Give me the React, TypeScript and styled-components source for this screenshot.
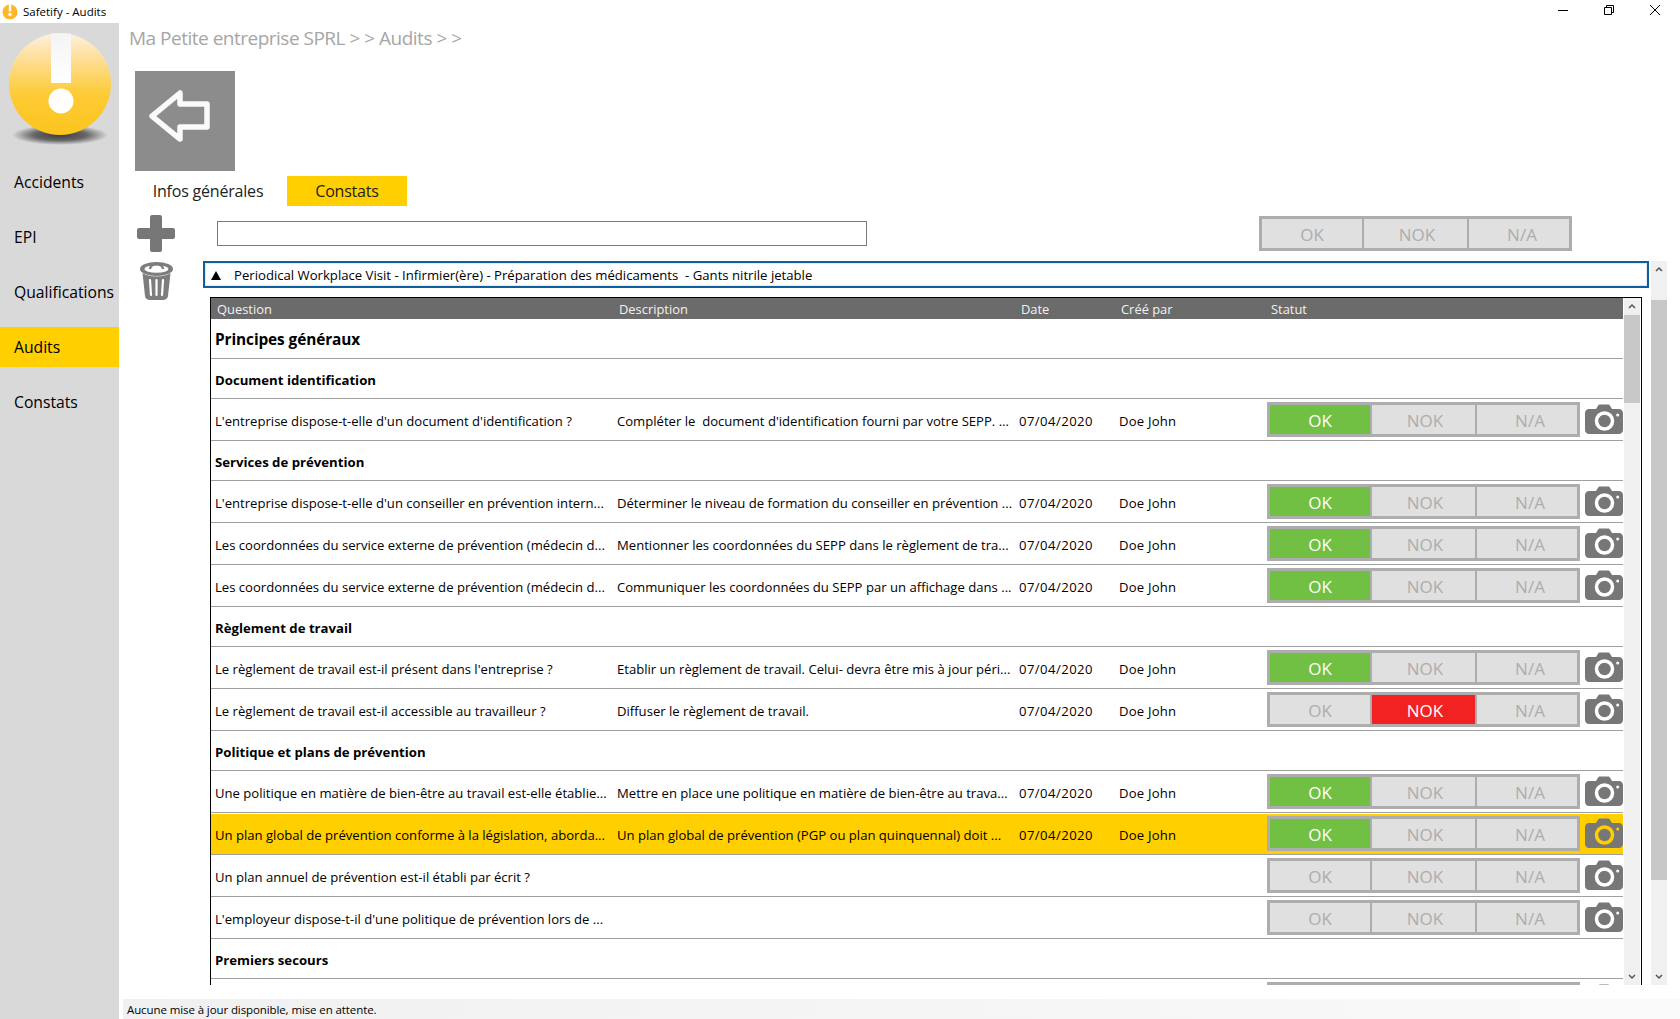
import styled, { createGlobalStyle } from 'styled-components';

type Status = 'ok' | 'nok' | 'none';
type Line =
  | { kind: 'section'; label: string }
  | { kind: 'row'; question: string; description?: string; filled?: boolean; status: Status; selected?: boolean; clipped?: boolean };

const FONT = `'Open Sans', 'Noto Sans', 'Liberation Sans', sans-serif`;

const Global = createGlobalStyle`
  html, body {
    margin: 0;
    padding: 0;
    height: 100%;
    overflow: hidden;
    background: #fff;
  }
  #root { height: 100%; }
  * { box-sizing: border-box; }
`;

const Window = styled.div`
  display: flex;
  flex-direction: column;
  width: 1680px;
  height: 1019px;
  font-family: ${FONT};
  color: #000;
`;

const TitleBar = styled.div`
  display: flex;
  align-items: center;
  height: 23px;
  flex: none;
  padding-left: 2px;
`;

const TitleText = styled.span`
  margin: 0 0 1px 5px;
  font-size: 11.5px;
`;

const WindowButtons = styled.div`
  display: flex;
  margin-left: auto;
  margin-right: 2px;
  height: 23px;
`;

const WindowButton = styled.div`
  display: flex;
  justify-content: center;
  width: 46px;
  padding-top: 4px;
`;

const Body = styled.div`
  display: flex;
  flex: 1;
  min-height: 0;
`;

const Sidebar = styled.nav`
  display: flex;
  flex-direction: column;
  width: 119px;
  flex: none;
  background: #d9d9d9;
`;

const LogoBox = styled.div`
  height: 139px;
  flex: none;
`;

const NavList = styled.div`
  display: flex;
  flex-direction: column;
  gap: 15px;
`;

const NavItem = styled.div<{ $active?: boolean }>`
  display: flex;
  align-items: center;
  height: 40px;
  padding-left: 14px;
  font-size: 15.7px;
  white-space: nowrap;
  background: ${props => (props.$active ? '#ffcf00' : 'transparent')};
`;

const Main = styled.main`
  display: flex;
  flex-direction: column;
  flex: 1;
  min-width: 0;
`;

const Breadcrumb = styled.div`
  height: 48px;
  flex: none;
  padding-left: 10px;
  font-size: 19px;
  line-height: 31px;
  letter-spacing: -0.5px;
  white-space: pre;
  color: #a6a6a6;
`;

const BackButton = styled.div`
  width: 100px;
  height: 100px;
  flex: none;
  margin-left: 16px;
  background: #8c8c8c;
`;

const Tabs = styled.div`
  display: flex;
  gap: 6px;
  margin: 5px 0 0 16px;
  flex: none;
`;

const Tab = styled.div<{ $active?: boolean }>`
  display: flex;
  align-items: center;
  justify-content: center;
  width: ${props => (props.$active ? '120px' : '146px')};
  height: 30px;
  font-size: 16px;
  letter-spacing: -0.2px;
  color: #222;
  background: ${props => (props.$active ? '#ffcf00' : 'transparent')};
`;

const Toolbar = styled.div`
  display: flex;
  align-items: center;
  height: 37px;
  flex: none;
  margin-top: 9px;
  padding-left: 18px;
`;

const SearchInput = styled.div`
  width: 650px;
  height: 25px;
  margin-left: 42px;
  border: 1px solid #7a7a7a;
  background: #fff;
`;

const FilterSlot = styled.div`
  margin-left: 392px;
`;

const Content = styled.div`
  display: flex;
  flex: 1;
  min-height: 0;
  padding: 9px 13px 0 21px;
`;

const ActionColumn = styled.div`
  width: 63px;
  flex: none;
`;

const GroupColumn = styled.div`
  display: flex;
  flex-direction: column;
  width: 1446px;
  flex: none;
  margin-bottom: 14px;
`;

const GroupHeader = styled.div`
  display: flex;
  align-items: center;
  height: 27px;
  flex: none;
  padding: 1px 0 0 6px;
  border: 2px solid #0f5f9f;
  box-shadow: inset 0 0 0 1px #dcebf7;
  font-size: 13.15px;
  white-space: pre;
`;

const Triangle = styled.span`
  width: 0;
  height: 0;
  margin-right: 13px;
  border-left: 5.5px solid transparent;
  border-right: 5.5px solid transparent;
  border-bottom: 9px solid #000;
`;

const TableFrame = styled.div`
  display: flex;
  flex: 1;
  min-height: 0;
  margin: 9px 7px 0 7px;
  border-top: 1px solid #000;
  border-left: 1px solid #000;
  border-right: 1px solid #000;
  overflow: hidden;
`;

const TableScroll = styled.div`
  flex: 1;
  min-width: 0;
  overflow: hidden;
`;

const HeaderRow = styled.div`
  display: grid;
  grid-template-columns: 402px 402px 100px 148px 1fr;
  align-items: center;
  height: 21px;
  padding: 1px 0 0 4px;
  background: #6b6b6b;
  color: #f2f2f2;
  font-size: 12.9px;
`;

const HeaderCell = styled.span<{ $indent?: number }>`
  padding-left: ${props => props.$indent ?? 2}px;
`;

const TitleRow = styled.div`
  display: flex;
  align-items: center;
  height: 40px;
  padding: 2px 0 0 4px;
  border-bottom: 1px solid #a0a0a0;
  font-size: 15.4px;
  font-weight: 700;
  letter-spacing: -0.1px;
`;

const SectionRow = styled.div`
  display: flex;
  align-items: center;
  height: 40px;
  padding: 2px 0 0 4px;
  border-bottom: 1px solid #a0a0a0;
  font-size: 13.2px;
  font-weight: 700;
`;

const DataRow = styled.div<{ $selected?: boolean }>`
  display: grid;
  grid-template-columns: 402px 402px 100px 148px 313px 1fr;
  align-items: center;
  height: 42px;
  padding-left: 4px;
  border-bottom: 1px solid #a0a0a0;
  font-size: 13.1px;
  white-space: nowrap;
  background: ${props => (props.$selected ? '#ffcf00' : 'transparent')};
  box-shadow: ${props => (props.$selected ? 'inset 0 1px 0 #fff' : 'none')};
`;

const Cell = styled.span`
  overflow: hidden;
  padding-top: 2px;
  white-space: pre;
`;

const DateCell = styled(Cell)`
  letter-spacing: 0.45px;
`;

const AuthorCell = styled(Cell)`
  letter-spacing: 0.2px;
`;

const CameraSlot = styled.div`
  display: flex;
  padding: 0 0 1px 5px;
`;

const Toggle = styled.div`
  display: grid;
  grid-template-columns: 100px 103px 100px;
  gap: 2px;
  width: 313px;
  height: 35px;
  padding: 3px;
  background: #adadad;
`;

const ToggleCell = styled.div<{ $tone?: 'ok' | 'nok' }>`
  display: flex;
  align-items: center;
  justify-content: center;
  padding-top: 1px;
  font-size: 17px;
  color: ${props => (props.$tone ? '#fff' : '#adadad')};
  background: ${props =>
    props.$tone === 'ok' ? '#72c043' : props.$tone === 'nok' ? '#f22222' : '#e0e0e0'};

  &:nth-child(2) {
    padding-left: 3px;
  }

  &:nth-child(3) {
    padding-left: 6px;
  }
`;

const Scrollbar = styled.div<{ $top: number; $thumb: number }>`
  position: relative;
  flex: none;
  width: 16px;
  background: #f0f0f0;

  &::before {
    content: '';
    position: absolute;
    left: 0;
    right: 0;
    top: ${props => props.$top}px;
    height: ${props => props.$thumb}px;
    background: #c8c8c8;
  }
`;

const InnerBar = styled(Scrollbar)`
  margin: 0 1px;
`;

const OuterBar = styled(Scrollbar)`
  margin: 0 0 14px 2px;
`;

const ArrowUp = styled.svg`
  position: absolute;
  top: 5px;
  left: 4px;
`;

const ArrowDown = styled.svg`
  position: absolute;
  bottom: 5px;
  left: 4px;
`;

const StatusBar = styled.div`
  display: flex;
  align-items: center;
  height: 20px;
  flex: none;
  margin-left: 4px;
  padding-left: 4px;
  font-size: 11.5px;
  letter-spacing: -0.1px;
  background: linear-gradient(90deg, #f0f0f0, #fafafa);
`;

const lines: Line[] = [
  { kind: 'section', label: 'Document identification' },
  {
    kind: 'row',
    question: "L'entreprise dispose-t-elle d'un document d'identification ?",
    description: "Compléter le  document d'identification fourni par votre SEPP. ...",
    filled: true,
    status: 'ok',
  },
  { kind: 'section', label: 'Services de prévention' },
  {
    kind: 'row',
    question: "L'entreprise dispose-t-elle d'un conseiller en prévention intern...",
    description: 'Déterminer le niveau de formation du conseiller en prévention ...',
    filled: true,
    status: 'ok',
  },
  {
    kind: 'row',
    question: 'Les coordonnées du service externe de prévention (médecin d...',
    description: 'Mentionner les coordonnées du SEPP dans le règlement de tra...',
    filled: true,
    status: 'ok',
  },
  {
    kind: 'row',
    question: 'Les coordonnées du service externe de prévention (médecin d...',
    description: 'Communiquer les coordonnées du SEPP par un affichage dans ...',
    filled: true,
    status: 'ok',
  },
  { kind: 'section', label: 'Règlement de travail' },
  {
    kind: 'row',
    question: "Le règlement de travail est-il présent dans l'entreprise ?",
    description: 'Etablir un règlement de travail. Celui- devra être mis à jour péri...',
    filled: true,
    status: 'ok',
  },
  {
    kind: 'row',
    question: 'Le règlement de travail est-il accessible au travailleur ?',
    description: 'Diffuser le règlement de travail.',
    filled: true,
    status: 'nok',
  },
  { kind: 'section', label: 'Politique et plans de prévention' },
  {
    kind: 'row',
    question: 'Une politique en matière de bien-être au travail est-elle établie...',
    description: 'Mettre en place une politique en matière de bien-être au trava...',
    filled: true,
    status: 'ok',
  },
  {
    kind: 'row',
    question: 'Un plan global de prévention conforme à la législation, aborda...',
    description: 'Un plan global de prévention (PGP ou plan quinquennal) doit ...',
    filled: true,
    status: 'ok',
    selected: true,
  },
  { kind: 'row', question: 'Un plan annuel de prévention est-il établi par écrit ?', status: 'none' },
  { kind: 'row', question: "L'employeur dispose-t-il d'une politique de prévention lors de ...", status: 'none' },
  { kind: 'section', label: 'Premiers secours' },
  { kind: 'row', question: '', status: 'none', clipped: true },
];

function StatusToggle({ status = 'none', blank }: { status?: Status; blank?: boolean }) {
  return (
    <Toggle>
      <ToggleCell $tone={status === 'ok' ? 'ok' : undefined}>{blank ? '' : 'OK'}</ToggleCell>
      <ToggleCell $tone={status === 'nok' ? 'nok' : undefined}>{blank ? '' : 'NOK'}</ToggleCell>
      <ToggleCell>{blank ? '' : 'N/A'}</ToggleCell>
    </Toggle>
  );
}

function CameraIcon({ ring = '#fff' }: { ring?: string }) {
  return (
    <svg width="38" height="30" viewBox="0 0 38 30">
      <path
        d="M4 5h7l2-3.2C13.4 1 14 .5 15 .5h8c1 0 1.600.5 2 1.300L27 5h7c2.200 0 4 1.800 4 4v17c0 2.200-1.800 4-4 4H4c-2.200 0-4-1.800-4-4V9c0-2.200 1.800-4 4-4z"
        fill="#777"
      />
      <circle cx="19.500" cy="17" r="8" fill="none" stroke={ring} strokeWidth="3.500" />
      <circle cx="32.700" cy="11" r="1.500" fill={ring} />
    </svg>
  );
}

function Logo() {
  return (
    <svg width="119" height="139" viewBox="0 0 119 139">
      <defs>
        <linearGradient id="sun" x1="0" y1="0" x2="0" y2="1">
          <stop offset="0" stopColor="#fdf0e0" />
          <stop offset="0.3" stopColor="#fddc8a" />
          <stop offset="0.6" stopColor="#fdcb36" />
          <stop offset="1" stopColor="#fcc41c" />
        </linearGradient>
        <radialGradient id="drop" cx="0.5" cy="0.5" r="0.5">
          <stop offset="0" stopColor="#3c3c3c" />
          <stop offset="0.55" stopColor="#666" />
          <stop offset="1" stopColor="#d9d9d9" />
        </radialGradient>
        <linearGradient id="mark" x1="0" y1="0" x2="0" y2="1">
          <stop offset="0" stopColor="#f4f4f4" />
          <stop offset="1" stopColor="#fff" />
        </linearGradient>
      </defs>
      <ellipse cx="60" cy="112" rx="48" ry="10" fill="url(#drop)" />
      <circle cx="60" cy="61" r="51" fill="url(#sun)" />
      <path d="M51 10.500h20V60H51z" fill="url(#mark)" />
      <circle cx="61" cy="78" r="12.500" fill="#fff" />
    </svg>
  );
}

function SmallLogo() {
  return (
    <svg width="16" height="16" viewBox="0 0 16 16">
      <circle cx="8" cy="8" r="7.500" fill="#fbb82a" />
      <path d="M6.800.5h2.400v7H6.800z" fill="#fff" />
      <circle cx="8" cy="10.500" r="1.700" fill="#fff" />
    </svg>
  );
}

function ChevronUp() {
  return (
    <ArrowUp width="8" height="6" viewBox="0 0 8 6">
      <path d="M1 5l3-3 3 3" fill="none" stroke="#555" strokeWidth="1.500" />
    </ArrowUp>
  );
}

function ChevronDown() {
  return (
    <ArrowDown width="8" height="6" viewBox="0 0 8 6">
      <path d="M1 1l3 3 3-3" fill="none" stroke="#555" strokeWidth="1.500" />
    </ArrowDown>
  );
}

export default function App() {
  return (
    <Window>
      <Global />
      <TitleBar>
        <SmallLogo />
        <TitleText>Safetify - Audits</TitleText>
        <WindowButtons>
          <WindowButton>
            <svg width="12" height="12" viewBox="0 0 12 12">
              <path d="M1 6.500h10" stroke="#000" />
            </svg>
          </WindowButton>
          <WindowButton>
            <svg width="12" height="12" viewBox="0 0 12 12">
              <path d="M1.500 3.500h7v7h-7zM3.500 3.500v-2h7v7h-2" fill="none" stroke="#000" />
            </svg>
          </WindowButton>
          <WindowButton>
            <svg width="12" height="12" viewBox="0 0 12 12">
              <path d="M1 1l10 10M11 1L1 11" stroke="#000" />
            </svg>
          </WindowButton>
        </WindowButtons>
      </TitleBar>
      <Body>
        <Sidebar>
          <LogoBox>
            <Logo />
          </LogoBox>
          <NavList>
            <NavItem>Accidents</NavItem>
            <NavItem>EPI</NavItem>
            <NavItem>Qualifications</NavItem>
            <NavItem $active>Audits</NavItem>
            <NavItem>Constats</NavItem>
          </NavList>
        </Sidebar>
        <Main>
          <Breadcrumb>{'Ma Petite entreprise SPRL > > Audits > >'}</Breadcrumb>
          <BackButton>
            <svg width="100" height="100" viewBox="0 0 100 100">
              <path
                d="M17 45L45 22v11h27v23H45v12z"
                fill="none"
                stroke="#fafafa"
                strokeWidth="5.500"
                strokeLinejoin="round"
              />
            </svg>
          </BackButton>
          <Tabs>
            <Tab>Infos générales</Tab>
            <Tab $active>Constats</Tab>
          </Tabs>
          <Toolbar>
            <svg width="38" height="37" viewBox="0 0 38 37">
              <path
                d="M15 0h8a2 2 0 0 1 2 2v11h11a2 2 0 0 1 2 2v7a2 2 0 0 1-2 2H25v11a2 2 0 0 1-2 2h-8a2 2 0 0 1-2-2V24H2a2 2 0 0 1-2-2v-7a2 2 0 0 1 2-2h11V2a2 2 0 0 1 2-2z"
                fill="#777"
              />
            </svg>
            <SearchInput />
            <FilterSlot>
              <StatusToggle />
            </FilterSlot>
          </Toolbar>
          <Content>
            <ActionColumn>
              <svg width="33" height="39" viewBox="0 0 33 39">
                <ellipse cx="16.500" cy="8" rx="16.500" ry="7" fill="#7d7d7d" />
                <ellipse cx="16.500" cy="8" rx="12" ry="3.800" fill="#fff" />
                <path d="M10 8C10 1.500 23 1.500 23 8" fill="none" stroke="#7d7d7d" strokeWidth="2.500" />
                <path
                  d="M2.500 12C8 16.500 25 16.500 30.500 12L28 35c-.3 2.500-2.500 4-5 4H10c-2.500 0-4.700-1.500-5-4z"
                  fill="#7d7d7d"
                />
                <path d="M10 19l1 15M16.500 19v15M23 19l-1 15" stroke="#fff" strokeWidth="2.200" strokeLinecap="round" />
              </svg>
            </ActionColumn>
            <GroupColumn>
              <GroupHeader>
                <Triangle />
                Periodical Workplace Visit - Infirmier(ère) - Préparation des médicaments  - Gants nitrile jetable
              </GroupHeader>
              <TableFrame>
                <TableScroll>
                  <HeaderRow>
                    <HeaderCell>Question</HeaderCell>
                    <HeaderCell>Description</HeaderCell>
                    <HeaderCell>Date</HeaderCell>
                    <HeaderCell>Créé par</HeaderCell>
                    <HeaderCell $indent={4}>Statut</HeaderCell>
                  </HeaderRow>
                  <TitleRow>Principes généraux</TitleRow>
                  {lines.map((line, i) =>
                    line.kind === 'section' ? (
                      <SectionRow key={i}>{line.label}</SectionRow>
                    ) : (
                      <DataRow key={i} $selected={line.selected}>
                        <Cell>{line.question}</Cell>
                        <Cell>{line.description ?? ''}</Cell>
                        <DateCell>{line.filled ? '07/04/2020' : ''}</DateCell>
                        <AuthorCell>{line.filled ? 'Doe John' : ''}</AuthorCell>
                        <StatusToggle status={line.status} blank={line.clipped} />
                        <CameraSlot>
                          <CameraIcon ring={line.selected ? '#ffcf00' : '#fff'} />
                        </CameraSlot>
                      </DataRow>
                    ),
                  )}
                </TableScroll>
                <InnerBar $top={17} $thumb={88}>
                  <ChevronUp />
                  <ChevronDown />
                </InnerBar>
              </TableFrame>
            </GroupColumn>
            <OuterBar $top={39} $thumb={580}>
              <ChevronUp />
              <ChevronDown />
            </OuterBar>
          </Content>
          <StatusBar>Aucune mise à jour disponible, mise en attente.</StatusBar>
        </Main>
      </Body>
    </Window>
  );
}
